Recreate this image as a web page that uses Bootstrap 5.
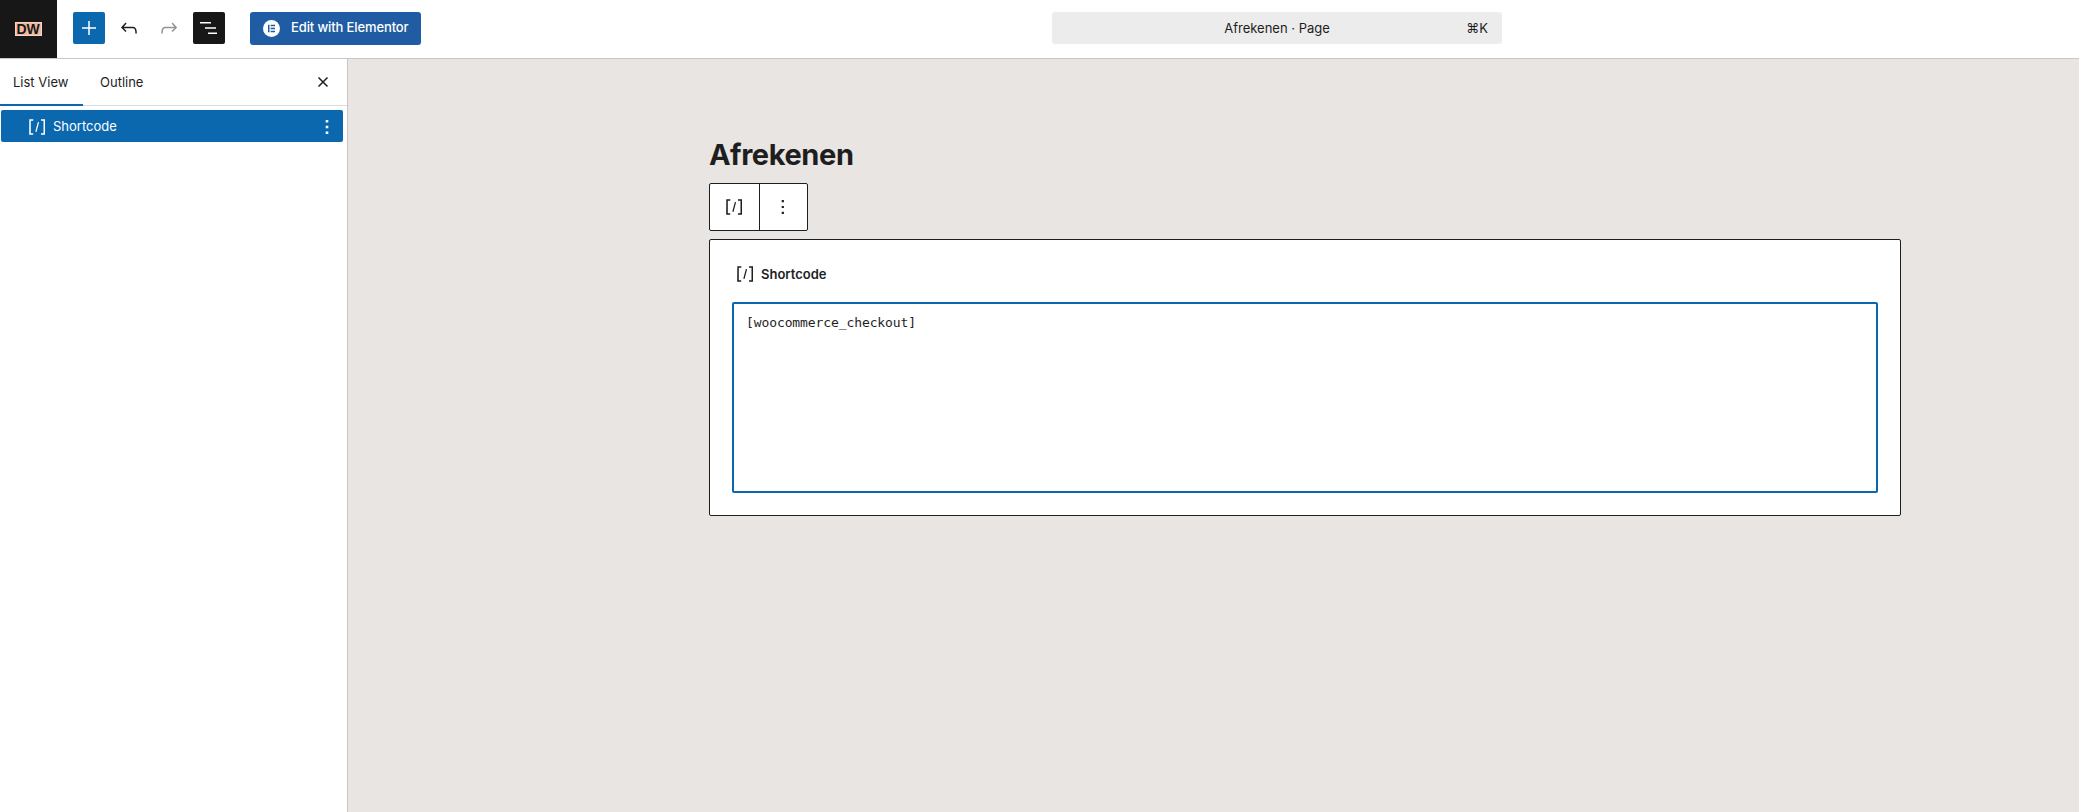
<!DOCTYPE html>
<html lang="nl">
<head>
<meta charset="utf-8">
<title>Afrekenen</title>
<link rel="stylesheet" href="https://cdn.jsdelivr.net/npm/bootstrap@5.3.0/dist/css/bootstrap.min.css">
<style>
html,body{height:100%;}
body{font-family:Inter,"Liberation Sans",sans-serif;font-size:13px;color:#1e1e1e;background:#fff;overflow:hidden;}
.shell{height:812px;}
.topbar{height:59px;border-bottom:1px solid #c9c6c3;flex:none;}
.logo-cell{width:57px;height:58px;background:#171717;padding-right:1px;}
.logo-mark{background:#f0b9a2;color:#171717;font:700 14px/1 "Liberation Sans",sans-serif;border:1px solid #f6d4c4;width:27px;height:14px;letter-spacing:-.2px;}
.tool-group{padding:0 0 2px 16px;}
.tool-btn{width:32px;height:32px;border:0;padding:0;border-radius:2px;background:transparent;color:#1e1e1e;}
.tool-blue{background:#0b68ae;color:#fff;}
.tool-dark{background:#171717;color:#fff;}
.tool-muted{color:#949494;}
.tool-gap{width:8px;}
.elem-btn{margin-left:25px;width:171px;height:33px;background:#1f5ca3;color:#fff;border:0;border-radius:3px;font-size:13px;font-weight:500;letter-spacing:-.12px;padding:0 0 0 13px;white-space:nowrap;}
.elem-dot{width:17px;height:17px;flex:none;margin-right:11px;}
.cmd-wrap{margin-left:631px;padding-bottom:2px;}
.cmd-bar{width:450px;height:32px;background:#ececec;border-radius:3px;font-size:13px;padding:1px 14px 0;position:relative;}
.cmd-key{position:absolute;right:14px;top:7px;font-size:13px;}
.side{width:348px;border-right:1px solid #c9c6c3;flex:none;}
.tabs{height:47px;border-bottom:1px solid #dcdcdc;padding-right:17px;}
.tab-item{height:47px;padding:0 0 0 13px;font-size:13px;line-height:46px;border:0;border-bottom:2px solid transparent;margin-bottom:-1px;background:none;color:#1e1e1e;white-space:nowrap;text-align:left;}
.tab-item.on{border-bottom-color:#0b68ae;width:83px;}
.tab-two{padding-left:17px;}
.tab-close{margin:16px 0 0 auto;}
.row-sel{margin:4px 4px 0 1px;height:32px;background:#0b68ae;color:#fff;border-radius:2px;padding-left:24px;padding-top:1px;font-size:13px;}
.row-ico{margin-right:4px;}
.row-more{margin:0 14px 0 auto;}
.canvas{background:#e8e5e2;padding:0 0 0 361px;}
.page-title{font:700 29px/36px Inter,"Liberation Sans",sans-serif;letter-spacing:-.4px;margin:78px 0 0;height:46px;color:#1e1e1e;}
.block-tools{width:99px;height:48px;background:#fff;border:1px solid #1e1e1e;border-radius:2px;}
.block-tools>div{width:49px;height:100%;}
.block-tools>div+div{border-left:1px solid #1e1e1e;}
.sc-block{width:1192px;height:277px;margin-top:8px;background:#fff;border:1px solid #1e1e1e;border-radius:2px;padding:22px 22px 0;}
.sc-label{font-size:13px;font-weight:600;height:24px;margin-bottom:16px;padding-left:1px;}
.sc-label svg{margin-right:4px;}
.sc-label span{padding-top:2px;}
.sc-area{height:191px;border:2px solid #0b68ae;border-radius:2px;padding:10px 12px;font:13px/18px "DejaVu Sans Mono","Liberation Mono",monospace;letter-spacing:-.1px;}
</style>
</head>
<body>
<div class="shell d-flex flex-column">
  <header class="topbar d-flex">
    <div class="logo-cell d-flex align-items-center justify-content-center"><span class="logo-mark d-flex align-items-center justify-content-center">DW</span></div>
    <div class="tool-group d-flex align-items-center">
      <button class="tool-btn tool-blue d-flex align-items-center justify-content-center" aria-label="Add">
        <svg width="24" height="24" viewBox="0 0 24 24" fill="currentColor"><path d="M11.25 5h1.5v6.25H19v1.5h-6.25V19h-1.5v-6.25H5v-1.5h6.25z"/></svg>
      </button>
      <span class="tool-gap"></span>
      <button class="tool-btn d-flex align-items-center justify-content-center" aria-label="Undo">
        <svg width="24" height="24" viewBox="0 0 24 24" fill="currentColor"><path d="M18.3 11.7c-.6-.6-1.4-.9-2.3-.9H6.7l2.9-3.3-1.1-1-4.5 5L8.5 16l1-1-2.7-2.7H16c.5 0 .9.2 1.3.5 1 1 1 3.4 1 4.5v.3h1.5v-.2c0-1.5 0-4.3-1.5-5.7z"/></svg>
      </button>
      <span class="tool-gap"></span>
      <button class="tool-btn tool-muted d-flex align-items-center justify-content-center" aria-label="Redo">
        <svg width="24" height="24" viewBox="0 0 24 24" fill="currentColor"><path d="M15.6 6.5l-1.1 1 2.9 3.3H8c-.9 0-1.7.3-2.3.9-1.4 1.5-1.4 4.2-1.4 5.6v.2h1.5v-.3c0-1.1 0-3.5 1-4.5.3-.3.7-.5 1.3-.5h9.2L14.5 15l1.1 1.1 4.6-4.6-4.6-5z"/></svg>
      </button>
      <span class="tool-gap"></span>
      <button class="tool-btn tool-dark d-flex align-items-center justify-content-center" aria-label="List view">
        <svg width="24" height="24" viewBox="0 0 24 24" fill="currentColor"><path d="M3 6h11v1.5H3zM8 11.25h11v1.5H8zM11 16.5h9V18h-9z"/></svg>
      </button>
      <button class="elem-btn d-flex align-items-center">
        <svg class="elem-dot" viewBox="0 0 17 17"><circle cx="8.5" cy="8.5" r="8.5" fill="#fff"/><path fill="#1f5ca3" d="M5 4.8h1.5v7.4H5zM7.6 4.8H12v1.4H7.6zM7.6 7.8H12v1.4H7.6zM7.6 10.8H12v1.4H7.6z"/></svg>
        Edit with Elementor
      </button>
    </div>
    <div class="cmd-wrap d-flex align-items-center">
      <div class="cmd-bar d-flex align-items-center justify-content-center">Afrekenen · Page<span class="cmd-key">⌘K</span></div>
    </div>
  </header>
  <div class="d-flex flex-grow-1">
    <aside class="side">
      <div class="tabs d-flex align-items-start">
        <button class="tab-item on">List View</button>
        <button class="tab-item tab-two">Outline</button>
        <svg class="tab-close" width="14" height="14" viewBox="0 0 14 14" fill="none" stroke="#1e1e1e" stroke-width="1.5"><path d="M2.5 2.5l9 9M11.5 2.5l-9 9"/></svg>
      </div>
      <div class="row-sel d-flex align-items-center">
        <svg class="row-ico" width="24" height="24" viewBox="0 0 24 24" fill="#fff"><path d="M16 4.2v1.5h2.5v12.5H16v1.5h4V4.2h-4zM4.2 19.8h4v-1.5H5.8V5.8h2.5V4.2h-4l-.1 15.6zm6.1-3.3l1.2.4 2.6-9.6-1.2-.4-2.6 9.6z"/></svg>
        Shortcode
        <svg class="row-more" width="4" height="16" viewBox="0 0 4 16" fill="#fff"><path d="M.7 1h2.6v2.4H.7zM.7 6.8h2.6v2.4H.7zM.7 12.6h2.6V15H.7z"/></svg>
      </div>
    </aside>
    <main class="canvas flex-grow-1">
      <h1 class="page-title">Afrekenen</h1>
      <div class="block-tools d-flex">
        <div class="d-flex align-items-center justify-content-center">
          <svg width="24" height="24" viewBox="0 0 24 24" fill="#1e1e1e"><path d="M16 4.2v1.5h2.5v12.5H16v1.5h4V4.2h-4zM4.2 19.8h4v-1.5H5.8V5.8h2.5V4.2h-4l-.1 15.6zm6.1-3.3l1.2.4 2.6-9.6-1.2-.4-2.6 9.6z"/></svg>
        </div>
        <div class="d-flex align-items-center justify-content-center">
          <svg width="4" height="16" viewBox="0 0 4 16" fill="#1e1e1e"><path d="M.7 1h2.2v2.2H.7zM.7 6.9h2.2v2.2H.7zM.7 12.8h2.2V15H.7z"/></svg>
        </div>
      </div>
      <section class="sc-block">
        <div class="sc-label d-flex align-items-center">
          <svg width="24" height="24" viewBox="0 0 24 24" fill="#1e1e1e"><path d="M16 4.2v1.5h2.5v12.5H16v1.5h4V4.2h-4zM4.2 19.8h4v-1.5H5.8V5.8h2.5V4.2h-4l-.1 15.6zm6.1-3.3l1.2.4 2.6-9.6-1.2-.4-2.6 9.6z"/></svg>
          <span>Shortcode</span>
        </div>
        <div class="sc-area">[woocommerce_checkout]</div>
      </section>
    </main>
  </div>
</div>
<script src="https://cdn.jsdelivr.net/npm/bootstrap@5.3.0/dist/js/bootstrap.bundle.min.js"></script>
</body>
</html>
